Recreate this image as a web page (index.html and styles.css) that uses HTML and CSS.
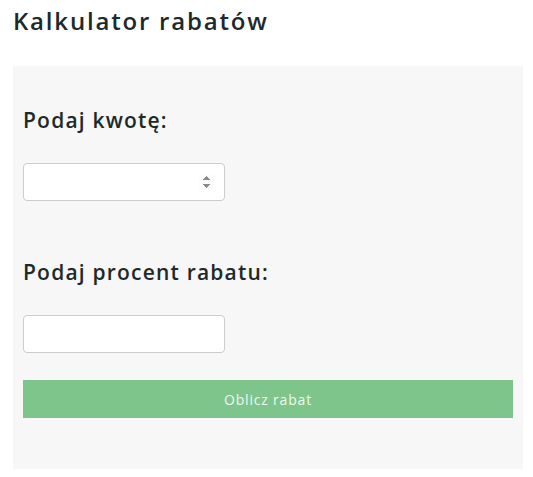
FILE: index.html
```html
<!DOCTYPE html>
<html>
<head>
    <link rel="stylesheet" href="styles.css">
</head>
<body>

    <h1 class="title">Kalkulator rabatów</h1>

    <div class="panel">
        <h2 class="label">Podaj kwotę:</h2>
        <input type="number" id="amount" class="field">

        <h2 class="label">Podaj procent rabatu:</h2>
        <input type="text" id="percent" class="field">

        <button class="green-button" onclick="calculate()">Oblicz rabat</button>
        <div id="result"></div>
    </div>

    <script>
        function calculate() {
            let amount = parseFloat(document.getElementById("amount").value);
            let percent = parseFloat(document.getElementById("percent").value);
            if (isNaN(amount) || isNaN(percent)) {
                document.getElementById("result").innerHTML = "Podaj poprawne dane.";
                return;
            }
            let discount = amount * percent / 100;
            document.getElementById("result").innerHTML = `Rabat: ${discount.toFixed(2)} zł, do zapłaty: ${(amount - discount).toFixed(2)} zł`;
        }
    </script>

</body>
</html>
```

FILE: styles.css
```css
body {
    font-family: "Open Sans", sans-serif;
    background-color: #fff;
    color: #1d2a2b;
    margin: 0;
    padding: 0 10px 0 13px;
}

.title {
    font-size: 24px;
    line-height: 32px;
    font-weight: 600;
    letter-spacing: 1.8px;
    margin: 0;
    padding-top: 5px;
    height: 61px;
}

.panel {
    background-color: #f7f7f7;
    padding: 40px 10px 0 10px;
    height: 363px;
}

.label {
    font-size: 21px;
    line-height: 28px;
    font-weight: 600;
    letter-spacing: 1.2px;
    margin: 0 0 29px 0;
}

.field {
    display: block;
    box-sizing: border-box;
    width: 202px;
    height: 38px;
    border: 1px solid #ccc;
    border-radius: 4px;
    background-color: #fff;
    padding: 6px 10px;
    margin-bottom: 57px;
}

#percent {
    margin-bottom: 27px;
}

input[type="number"]::-webkit-inner-spin-button {
    opacity: 1;
}

.green-button {
    display: block;
    width: 100%;
    height: 38px;
    border: none;
    background-color: #7dc58b;
    color: #eef8ef;
    font-family: "Open Sans", sans-serif;
    font-size: 14px;
    font-weight: 500;
    letter-spacing: 0.8px;
    cursor: pointer;
}

.green-button:hover {
    background-color: #6bb97a;
}
```
